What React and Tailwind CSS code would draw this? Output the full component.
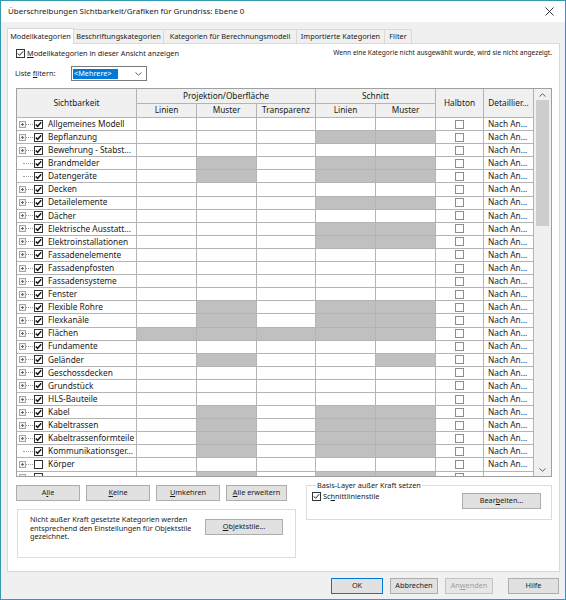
import React from 'react'

// name, has expander, gray columns (0..4), checked
const rows = [
  ['Allgemeines Modell', true, [], true],
  ['Bepflanzung', true, [3, 4], true],
  ['Bewehrung - Stabst...', true, [], true],
  ['Brandmelder', false, [1, 3, 4], true],
  ['Datengeräte', false, [1, 3, 4], true],
  ['Decken', true, [], true],
  ['Detailelemente', true, [3, 4], true],
  ['Dächer', true, [], true],
  ['Elektrische Ausstatt...', true, [3, 4], true],
  ['Elektroinstallationen', true, [3, 4], true],
  ['Fassadenelemente', true, [], true],
  ['Fassadenpfosten', true, [], true],
  ['Fassadensysteme', true, [], true],
  ['Fenster', true, [], true],
  ['Flexible Rohre', true, [1, 3, 4], true],
  ['Flexkanäle', true, [1, 3, 4], true],
  ['Flächen', true, [0, 1, 2, 3, 4], true],
  ['Fundamente', true, [], true],
  ['Geländer', true, [1, 4], true],
  ['Geschossdecken', true, [], true],
  ['Grundstück', true, [], true],
  ['HLS-Bauteile', true, [], true],
  ['Kabel', true, [1, 3, 4], true],
  ['Kabeltrassen', true, [1, 3, 4], true],
  ['Kabeltrassenformteile', true, [1, 3, 4], true],
  ['Kommunikationsger...', false, [1, 3, 4], true],
  ['Körper', true, [], false],
  ['', true, [1, 3, 4], false],
]

const valueCols = ['w-[60px]', 'w-[60px]', 'w-[59px]', 'w-[60px]', 'w-[60px]']

const Box = ({ checked, border = '#333333', bold }) => (
  <svg width="9" height="9" viewBox="0 0 9 9" className="shrink-0">
    <rect x="0.5" y="0.5" width="8" height="8" fill="white" stroke={border} />
    {checked && (
      <path d="M1.8 4.4 L3.6 6.3 L7.2 2.2" stroke="#1a1a1a" strokeWidth={bold ? 1.5 : 1} fill="none" />
    )}
  </svg>
)

const Expander = () => (
  <svg width="7" height="7" viewBox="0 0 7 7" className="shrink-0">
    <rect x="0.5" y="0.5" width="6" height="6" fill="#f3f3f3" stroke="#a6a6a6" />
    <path d="M2 3.5h3M3.5 2v3" stroke="#6b6b6b" />
  </svg>
)

const Chevron = ({ up }) => (
  <svg width="7" height="4" viewBox="0 0 7 4">
    <path d={up ? 'M0.5 3.5 L3.5 0.8 L6.5 3.5' : 'M0.5 0.5 L3.5 3.2 L6.5 0.5'} stroke="#606060" fill="none" />
  </svg>
)

const Btn = ({ children, className = '', def, disabled }) => (
  <div
    className={`flex items-center justify-center h-[16px] border ${
      def ? 'border-[#0078d7]' : disabled ? 'border-[#c4c4c4]' : 'border-[#adadad]'
    } ${disabled ? 'bg-[#e6e6e6] text-[#a0a0a0]' : 'bg-[#e1e1e1] text-[#1a1a1a]'} ${className}`}
  >
    {children}
  </div>
)

const GridRow = ({ row }) => {
  const [name, exp, gray, checked] = row
  return (
    <div className="flex h-[13.1px] shrink-0">
      <div className="w-[120px] flex items-center pl-[2px] border-r border-b border-[#b4b4b4] overflow-hidden whitespace-nowrap">
        {exp ? <Expander /> : <div className="w-[4px] shrink-0" />}
        <div className={`${exp ? 'w-[7px]' : 'w-[10px]'} shrink-0 border-t border-dotted border-[#a0a0a0]`} />
        <div className="ml-[1px]">
          <Box checked={checked} bold />
        </div>
        <span className="ml-[5px]">{name}</span>
      </div>
      {valueCols.map((w, i) => (
        <div
          key={i}
          className={`${w} border-r border-b border-[#b4b4b4] ${gray.includes(i) ? 'bg-[#c0c0c0]' : 'bg-white'}`}
        />
      ))}
      <div className="w-[48px] border-r border-b border-[#b4b4b4] flex items-center justify-center">
        <Box border="#8c8c8c" />
      </div>
      <div className="w-[50px] border-r border-b border-[#b4b4b4] flex items-center pl-[4px] whitespace-nowrap overflow-hidden">
        {name ? 'Nach An...' : ''}
      </div>
    </div>
  )
}

const hd = 'border-r border-b border-[#b4b4b4] flex items-center justify-center whitespace-nowrap'

export default function App() {
  return (
    <div className="w-[566px] h-[600px] border border-[#329bb3] bg-[#f0f0f0] flex flex-col text-[#1a1a1a] font-['Noto_Sans','Liberation_Sans',sans-serif] text-[7.3px] leading-none overflow-hidden">
      {/* title bar */}
      <div className="h-[21px] shrink-0 bg-white flex items-center justify-between pl-[7px] pr-[11px]">
        <span className="text-[7.95px]">Überschreibungen Sichtbarkeit/Grafiken für Grundriss: Ebene 0</span>
        <svg width="9" height="9" viewBox="0 0 9 9">
          <path d="M0.5 0.5 L8.5 8.5 M8.5 0.5 L0.5 8.5" stroke="#222" strokeWidth="0.9" />
        </svg>
      </div>

      {/* tabs */}
      <div className="h-[21px] shrink-0 flex items-end pl-[6px] relative z-10">
        <div className="w-[67px] h-[16px] -mb-px bg-white border border-b-0 border-[#d9d9d9] flex items-center justify-center">
          Modellkategorien
        </div>
        <div className="w-[90px] h-[14px] border-t border-r border-[#d9d9d9] flex items-center justify-center">
          Beschriftungskategorien
        </div>
        <div className="w-[133px] h-[14px] border-t border-r border-[#d9d9d9] flex items-center justify-center">
          Kategorien für Berechnungsmodell
        </div>
        <div className="w-[88px] h-[14px] border-t border-r border-[#d9d9d9] flex items-center justify-center">
          Importierte Kategorien
        </div>
        <div className="w-[27px] h-[14px] border-t border-r border-[#d9d9d9] flex items-center justify-center">
          Filter
        </div>
      </div>

      {/* tab page */}
      <div className="h-[529px] shrink-0 ml-[6px] mr-[5px] bg-white border border-[#d9d9d9] flex flex-col">
        <div className="mt-[5px] h-[9px] flex items-center justify-between pl-[8px] pr-[7px]">
          <div className="flex items-center">
            <Box checked />
            <span className="ml-[2px]">
              <span className="underline">M</span>odellkategorien in dieser Ansicht anzeigen
            </span>
          </div>
          <span className="text-[6.6px]">Wenn eine Kategorie nicht ausgewählt wurde, wird sie nicht angezeigt.</span>
        </div>

        <div className="mt-[8px] h-[15px] flex items-center pl-[7px]">
          <span className="w-[56px]">
            Liste <span className="underline">f</span>iltern:
          </span>
          <div className="w-[76px] h-[15px] border border-[#7a7a7a] flex items-center pl-[1px] pr-[4px] justify-between">
            <span className="h-[10px] w-[45px] bg-[#0078d7] text-white flex items-center pl-[1px]">&lt;Mehrere&gt;</span>
            <Chevron />
          </div>
        </div>

        {/* grid */}
        <div className="mt-[7px] ml-[8px] w-[536px] h-[389px] shrink-0 border border-[#a0a0a0] flex overflow-hidden text-[8.3px]">
          <div className="w-[517px] flex flex-col">
            <div className="grid grid-cols-[120px_60px_60px_59px_60px_60px_48px_50px] grid-rows-[15px_14px] bg-[#f0f0f0] shrink-0">
              <div className={`row-span-2 ${hd}`}>Sichtbarkeit</div>
              <div className={`col-span-3 ${hd}`}>Projektion/Oberfläche</div>
              <div className={`col-span-2 ${hd}`}>Schnitt</div>
              <div className={`row-span-2 ${hd}`}>Halbton</div>
              <div className={`row-span-2 ${hd}`}>Detaillier...</div>
              <div className={hd}>Linien</div>
              <div className={hd}>Muster</div>
              <div className={hd}>Transparenz</div>
              <div className={hd}>Linien</div>
              <div className={hd}>Muster</div>
            </div>
            {rows.map((r, i) => (
              <GridRow key={i} row={r} />
            ))}
          </div>
          <div className="w-[17px] bg-[#f0f0f0] flex flex-col items-center">
            <div className="h-[11px] flex items-center justify-center">
              <Chevron up />
            </div>
            <div className="w-[13px] h-[126px] bg-[#cdcdcd]" />
            <div className="flex-1" />
            <div className="h-[12px] flex items-center justify-center">
              <Chevron />
            </div>
          </div>
        </div>

        {/* lower controls */}
        <div className="mt-[8px] flex pl-[8px]">
          <div className="w-[281px] flex flex-col">
            <div className="flex gap-[6px]">
              <Btn className="w-[64px] h-[15px]">
                <span>A<span className="underline">l</span>le</span>
              </Btn>
              <Btn className="w-[64px] h-[15px]">
                <span><span className="underline">K</span>eine</span>
              </Btn>
              <Btn className="w-[64px] h-[15px]">
                <span><span className="underline">U</span>mkehren</span>
              </Btn>
              <Btn className="w-[61px] h-[15px]">
                <span><span className="underline">A</span>lle erweitern</span>
              </Btn>
            </div>
            <div className="mt-[8px] ml-[1px] w-[279px] h-[49px] border border-[#dcdcdc] flex items-start pt-[5px] pl-[12px]">
              <div className="w-[170px] leading-[8.7px]">
                Nicht außer Kraft gesetzte Kategorien werden entsprechend den Einstellungen für Objektstile gezeichnet.
              </div>
              <Btn className="ml-[5px] mt-[4px] w-[78px] h-[15px]">
                <span><span className="underline">O</span>bjektstile...</span>
              </Btn>
            </div>
          </div>
          <fieldset className="ml-[9px] -mt-[4px] w-[246px] h-[39px] border border-[#dcdcdc] flex items-start pl-[5px]">
            <legend className="ml-[4px] px-[1px] leading-[9px]">Basis-Layer außer Kraft setzen</legend>
            <div className="mt-[2px] flex items-center">
              <Box checked />
              <span className="ml-[2px]">
                Sc<span className="underline">h</span>nittlinienstile
              </span>
            </div>
            <Btn className="ml-auto mr-[10px] mt-[3px] w-[79px] h-[15px]">
              <span>Bear<span className="underline">b</span>eiten...</span>
            </Btn>
          </fieldset>
        </div>
      </div>

      {/* dialog buttons */}
      <div className="flex-1 flex items-start justify-end pt-[6px] pr-[6px]">
        <Btn def className="w-[52px]">OK</Btn>
        <Btn className="ml-[7px] w-[48px]">Abbrechen</Btn>
        <Btn disabled className="ml-[7px] w-[48px]">
          <span>An<span className="underline">w</span>enden</span>
        </Btn>
        <Btn className="ml-[15px] w-[51px]">Hilfe</Btn>
      </div>
    </div>
  )
}
